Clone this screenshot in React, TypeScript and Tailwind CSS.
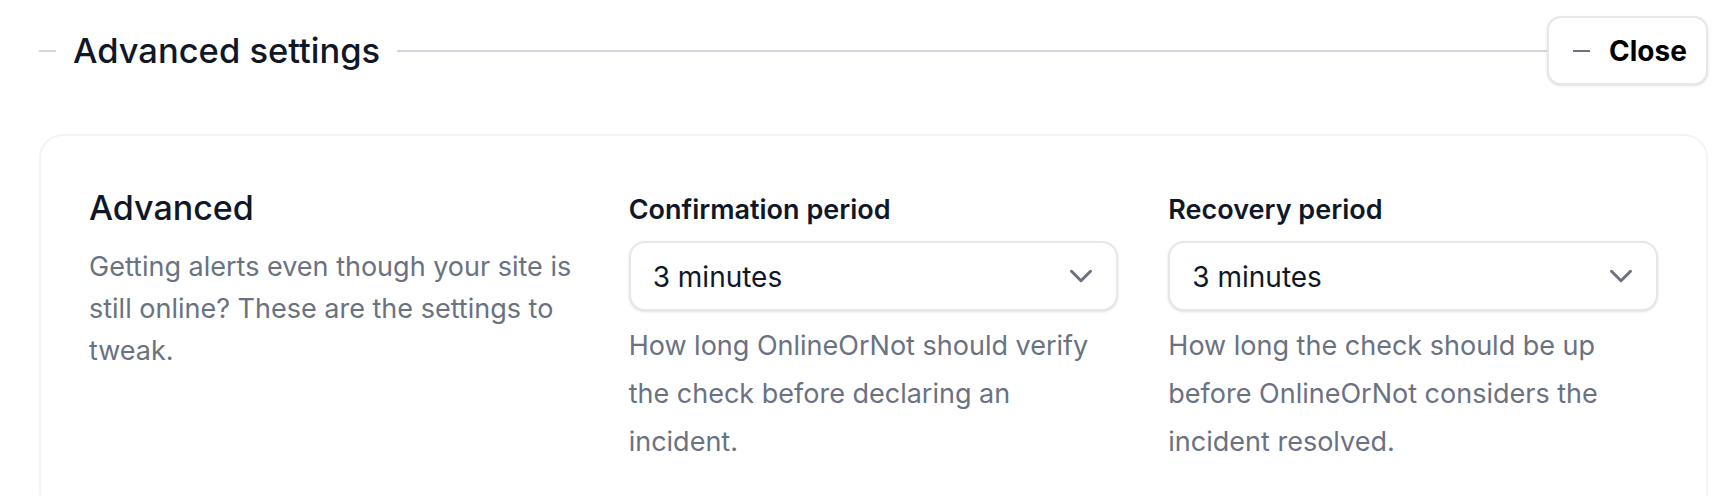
import { ChevronDown } from 'lucide-react';

const font = { fontFamily: 'Inter, "Noto Sans", sans-serif' };

interface PeriodFieldProps {
  label: string;
  value: string;
  help: string;
}

const PeriodField = ({ label, value, help }: PeriodFieldProps) => {
  return (
    <div className="flex flex-col">
      <label className="pt-[2px] text-[27px] leading-[48px] font-semibold text-gray-900">{label}</label>
      <div className="mt-[7px] flex h-[70px] items-center justify-between rounded-[16px] border-2 border-gray-200 bg-white pl-[22px] pr-[16px] shadow-sm">
        <span className="pt-[2px] text-[28px] text-gray-900">{value}</span>
        <ChevronDown className="h-[38px] w-[38px] text-gray-500" strokeWidth={1.9} />
      </div>
      <p className="mt-[11px] text-[27px] leading-[48px] text-gray-500">{help}</p>
    </div>
  );
};

const App = () => {
  return (
    <div className="min-h-screen bg-white pl-[39px] pr-[24px] pt-[16px]" style={font}>
      {/* Section divider */}
      <div className="flex items-center">
        <div className="h-[2px] w-[17px] bg-gray-300"></div>
        <h2 className="px-[17px] text-[34.5px] font-medium leading-[48px] text-gray-900">Advanced settings</h2>
        <div className="h-[2px] flex-1 bg-gray-300"></div>
        <button className="flex h-[69px] w-[161px] items-center rounded-[14px] border-2 border-gray-200 bg-white pl-[24px] shadow-sm">
          <span className="h-[2px] w-[17px] bg-gray-500"></span>
          <span className="ml-[19px] text-[28px] font-bold text-black">Close</span>
        </button>
      </div>

      {/* Card */}
      <div className="mt-[49px] rounded-[24px] border-2 border-gray-100 bg-white px-[48px] pb-[48px] pt-[48px]">
        <div className="grid grid-cols-3 gap-x-[50px]">
          <div>
            <h3 className="text-[34px] font-medium leading-[48px] text-gray-900">Advanced</h3>
            <p className="mt-[14px] text-[27px] leading-[42px] text-gray-500">
              Getting alerts even though your site is still online? These are the settings to tweak.
            </p>
          </div>
          <PeriodField
            label="Confirmation period"
            value="3 minutes"
            help="How long OnlineOrNot should verify the check before declaring an incident."
          />
          <PeriodField
            label="Recovery period"
            value="3 minutes"
            help="How long the check should be up before OnlineOrNot considers the incident resolved."
          />
        </div>
      </div>
    </div>
  );
};

export default App;
